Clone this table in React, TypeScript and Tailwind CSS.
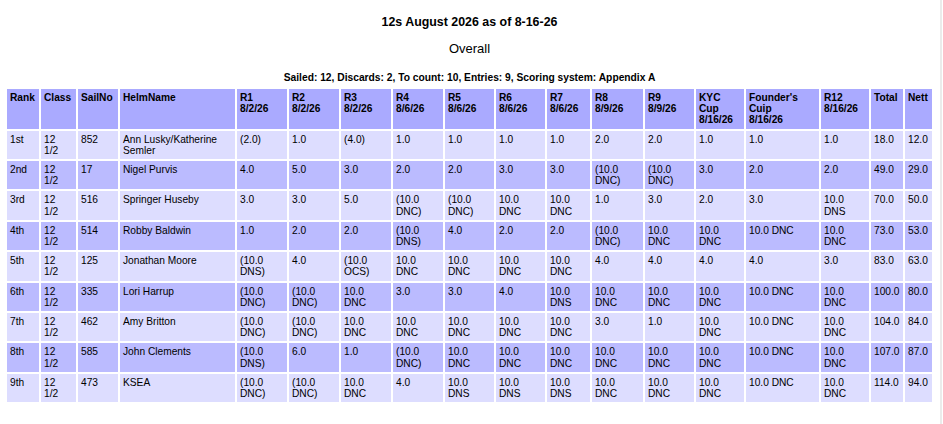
import React from "react";

const headers: string[] = [
  "Rank",
  "Class",
  "SailNo",
  "HelmName",
  "R1\n8/2/26",
  "R2\n8/2/26",
  "R3\n8/2/26",
  "R4\n8/6/26",
  "R5\n8/6/26",
  "R6\n8/6/26",
  "R7\n8/6/26",
  "R8\n8/9/26",
  "R9\n8/9/26",
  "KYC\nCup\n8/16/26",
  "Founder's\nCuip\n8/16/26",
  "R12\n8/16/26",
  "Total",
  "Nett",
];

const C = "10.0\nDNC";
const PC = "(10.0\nDNC)";
const S = "10.0\nDNS";
const PS = "(10.0\nDNS)";
const F = "10.0 DNC";

const rows: string[][] = [
  ["1st", "12\n1/2", "852", "Ann Lusky/Katherine\nSemler", "(2.0)", "1.0", "(4.0)", "1.0", "1.0", "1.0", "1.0", "2.0", "2.0", "1.0", "1.0", "1.0", "18.0", "12.0"],
  ["2nd", "12\n1/2", "17", "Nigel Purvis", "4.0", "5.0", "3.0", "2.0", "2.0", "3.0", "3.0", PC, PC, "3.0", "2.0", "2.0", "49.0", "29.0"],
  ["3rd", "12\n1/2", "516", "Springer Huseby", "3.0", "3.0", "5.0", PC, PC, C, C, "1.0", "3.0", "2.0", "3.0", S, "70.0", "50.0"],
  ["4th", "12\n1/2", "514", "Robby Baldwin", "1.0", "2.0", "2.0", PS, "4.0", "2.0", "2.0", PC, C, C, F, C, "73.0", "53.0"],
  ["5th", "12\n1/2", "125", "Jonathan Moore", PS, "4.0", "(10.0\nOCS)", C, C, C, C, "4.0", "4.0", "4.0", "4.0", "3.0", "83.0", "63.0"],
  ["6th", "12\n1/2", "335", "Lori Harrup", PC, PC, C, "3.0", "3.0", "4.0", S, C, C, C, F, C, "100.0", "80.0"],
  ["7th", "12\n1/2", "462", "Amy Britton", PC, PC, C, C, C, C, C, "3.0", "1.0", C, F, C, "104.0", "84.0"],
  ["8th", "12\n1/2", "585", "John Clements", PS, "6.0", "1.0", PC, C, C, C, C, C, C, F, C, "107.0", "87.0"],
  ["9th", "12\n1/2", "473", "KSEA", PC, PC, C, "4.0", S, S, S, C, C, C, F, C, "114.0", "94.0"],
];

export default function App() {
  return (
    <div
      className="flex w-[943px] min-h-[424px] bg-white text-black"
      style={{ fontFamily: '"Liberation Sans", Arial, sans-serif' }}
    >
      <div className="w-[940px] flex flex-col">
        <div className="w-[939px] pt-[15px] flex flex-col items-center">
          <div className="text-[12.4px] leading-[15px] font-bold">
            12s August 2026 as of 8-16-26
          </div>
          <div className="mt-[11px] text-[13px] leading-[15px]">Overall</div>
          <div className="mt-[16px] text-[10.25px] leading-[12px] font-bold">
            Sailed: 12, Discards: 2, To count: 10, Entries: 9, Scoring system: Appendix A
          </div>
        </div>
        <div className="mt-[3px] ml-[5px] w-[929px] p-[2px] grid gap-[2px] grid-cols-[32px_35px_40px_115px_50px_50px_50px_50px_49px_49px_43px_51px_49px_48px_73px_48px_32px_27px] text-[10.2px] leading-[11.2px]">
          {headers.map((h, i) => (
            <div
              key={"h" + i}
              className="bg-[#aaaaff] px-[3px] py-[3px] font-bold whitespace-pre-line"
            >
              {h}
            </div>
          ))}
          {rows.map((r, ri) =>
            r.map((c, ci) => (
              <div
                key={ri + "-" + ci}
                className={
                  (ri % 2 === 0 ? "bg-[#ddddff]" : "bg-[#bbbbff]") +
                  " px-[3px] py-[3px] whitespace-pre-line"
                }
              >
                {c}
              </div>
            ))
          )}
        </div>
      </div>
      <div className="w-[2px] bg-[#ebebeb]" />
    </div>
  );
}
